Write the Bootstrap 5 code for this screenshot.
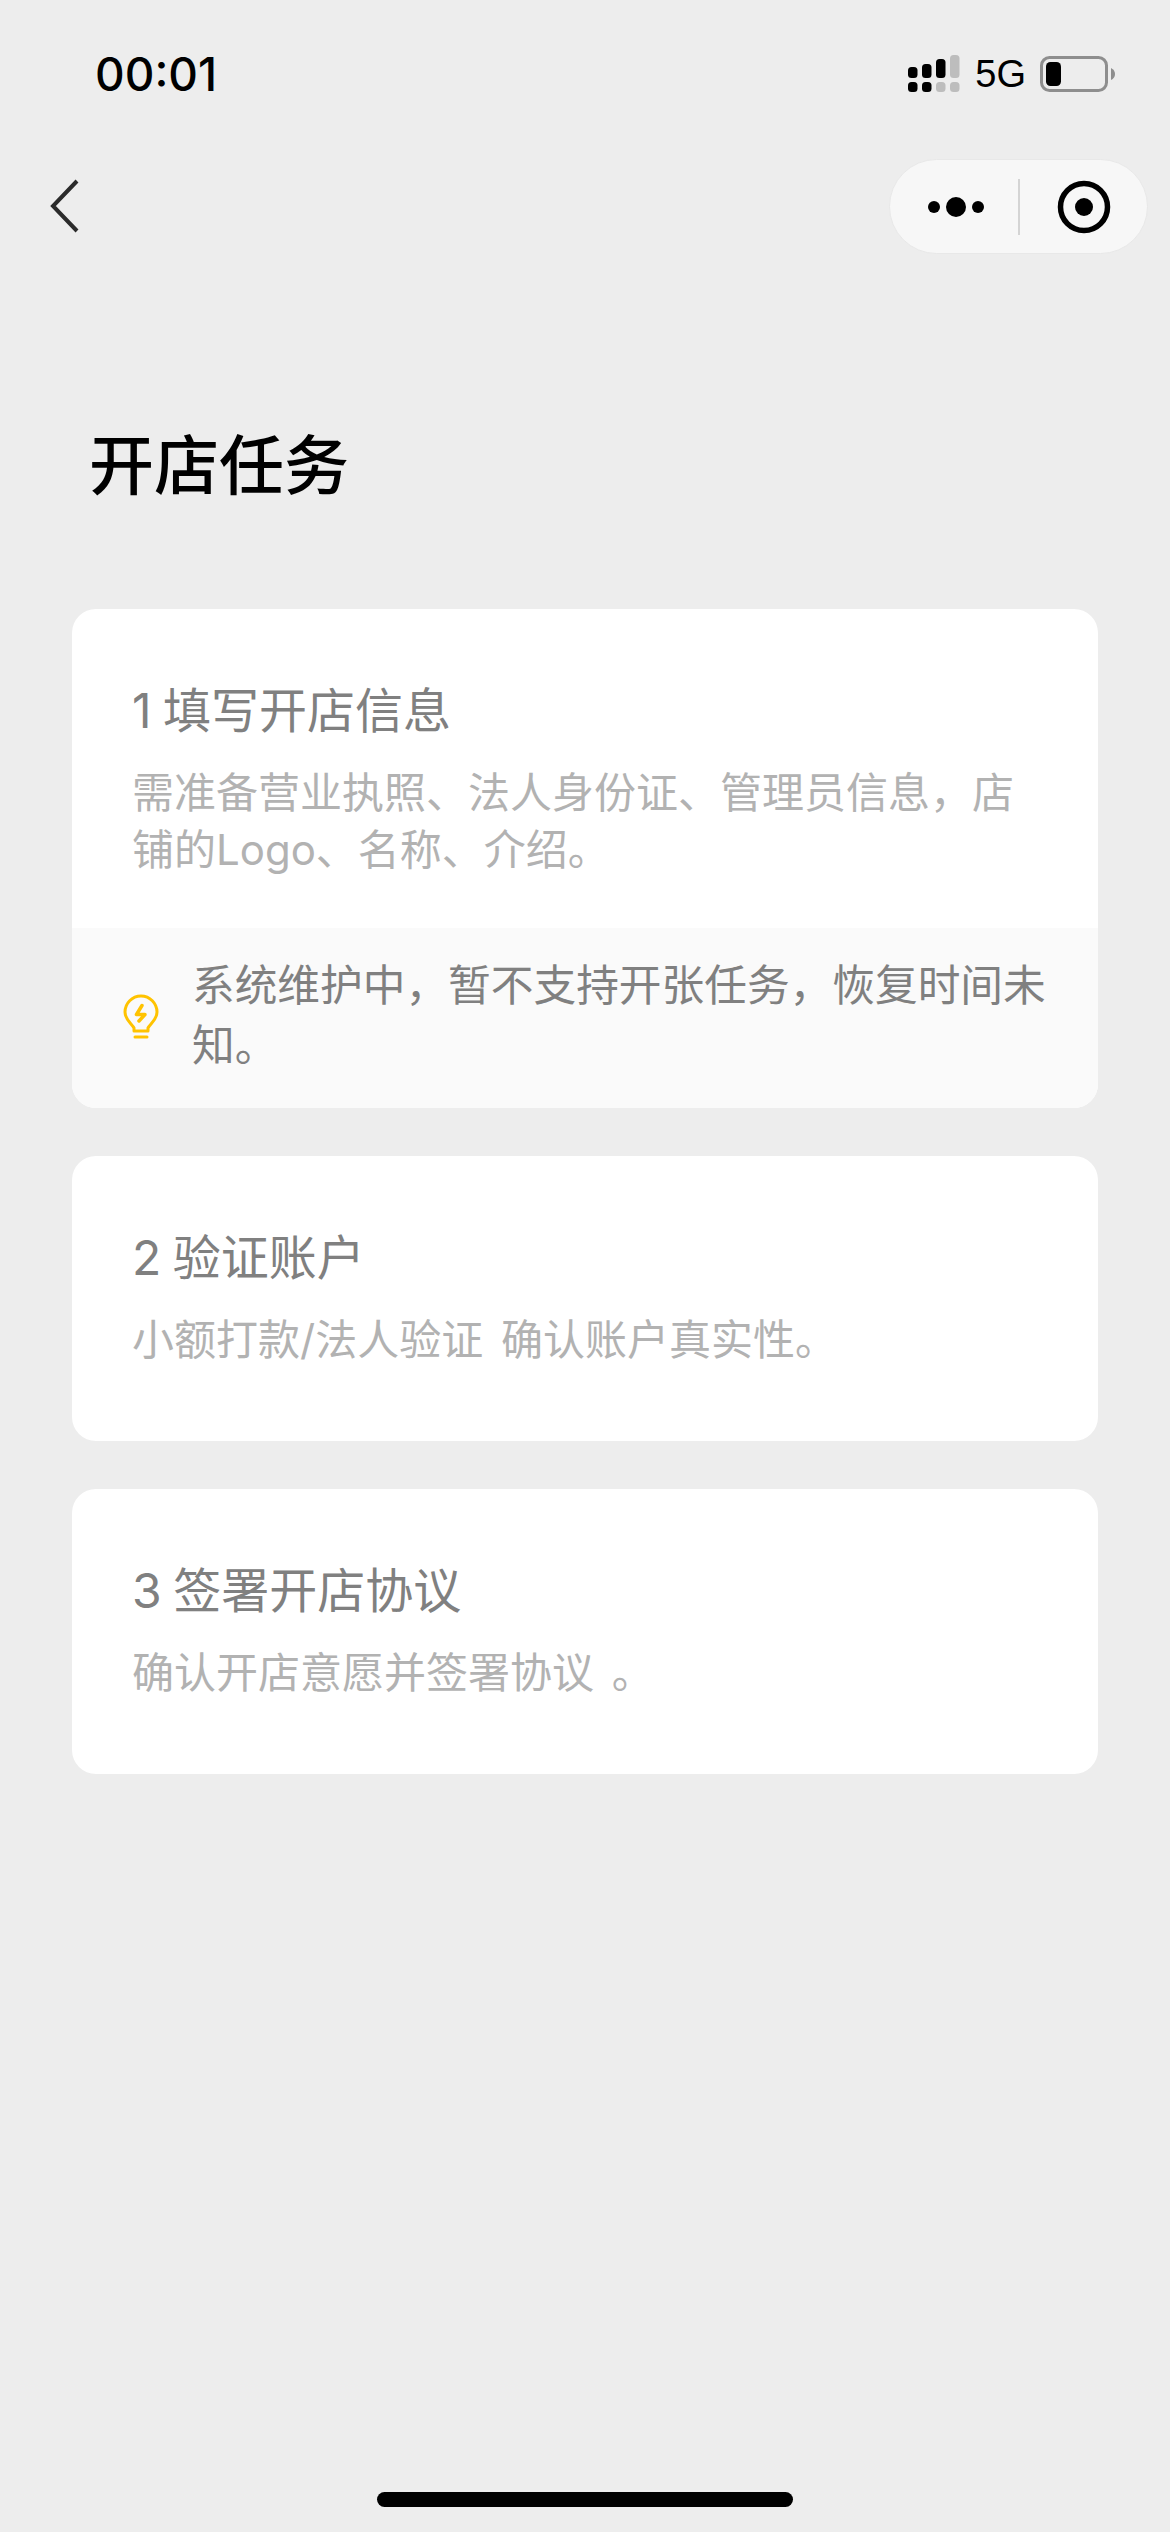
<!DOCTYPE html>
<html lang="zh-CN">
  <head>
    <meta charset="UTF-8">
    <meta name="viewport" content="width=device-width, initial-scale=1.0">
    <title>开店任务</title>
    <link href="https://cdn.jsdelivr.net/npm/bootstrap@5.3.0/dist/css/bootstrap.min.css" rel="stylesheet">
    <style>
      body {
        background: #ededed;
        font-family: Inter, "Noto Sans CJK SC", sans-serif;
        min-height: 2532px;
      }

      .status-bar {
        height: 132px;
        padding: 0 54px 0 95px;
      }

      .status-time {
        font-size: 46px;
        font-weight: 500;
        color: #000;
        line-height: 1;
        padding-top: 16px;
      }

      .status-net {
        font-family: "Liberation Sans", sans-serif;
        font-size: 38px;
        color: #000;
        line-height: 1;
        margin: 0 14px 0 15px;
      }

      .nav-row {
        height: 122px;
        padding: 27px 22px 0 50px;
      }

      .back-icon {
        margin-top: 20px;
      }

      .capsule {
        width: 259px;
        height: 95px;
        background: #f7f7f7;
        border: 1px solid #e8e8e8;
        border-radius: 48px;
      }

      .capsule-half {
        width: 129px;
      }

      .capsule-more {
        padding-left: 10px;
      }

      .capsule-scan {
        padding-left: 2px;
      }

      .capsule-line {
        width: 2px;
        height: 56px;
        background: #d4d4d4;
      }

      .page-title {
        font-size: 65px;
        font-weight: 500;
        color: #000;
        line-height: 92px;
        margin: 166px 0 97px 89px;
      }

      .task-list {
        padding: 0 72px;
      }

      .task-card {
        border: 0;
        border-radius: 24px;
        overflow: hidden;
        margin-bottom: 48px;
      }

      .task-body {
        padding: 72px 60px 73px;
      }

      .task-body-short {
        padding-bottom: 50px;
      }

      .task-name {
        font-size: 48px;
        font-weight: 400;
        color: #808080;
        line-height: 60px;
        word-spacing: -2px;
        margin-bottom: 23px;
      }

      .task-desc {
        font-size: 42px;
        color: #b2b2b2;
        line-height: 57px;
        word-spacing: 6px;
        margin: 0;
      }

      .task-notice {
        background: #fafafa;
        padding: 28px 32px 32px 51px;
        gap: 33px;
        font-size: 42.7px;
        line-height: 60px;
        color: #808080;
      }

      .home-bar {
        width: 416px;
        height: 15px;
        background: #000;
        border-radius: 8px;
        margin-bottom: 25px;
      }
    </style>
  </head>
  <body class="d-flex flex-column">
    <div class="status-bar d-flex justify-content-between align-items-center">
      <div class="status-time">00:01</div>
      <div class="d-flex align-items-center pt-3">
        <svg width="52" height="38" viewBox="0 0 52 38">
          <rect x="0" y="12" width="9.5" height="11" rx="3.5" fill="#000"/>
          <rect x="14" y="9" width="9.5" height="14" rx="3.5" fill="#000"/>
          <rect x="28" y="4" width="9.5" height="19" rx="3.5" fill="#000"/>
          <rect x="42" y="0" width="9.5" height="23" rx="3.5" fill="#bdbdbd"/>
          <rect x="0" y="27" width="9.5" height="10" rx="3.5" fill="#000"/>
          <rect x="14" y="27" width="9.5" height="10" rx="3.5" fill="#000"/>
          <rect x="28" y="27" width="9.5" height="10" rx="3.5" fill="#bdbdbd"/>
          <rect x="42" y="27" width="9.5" height="10" rx="3.5" fill="#bdbdbd"/>
        </svg>
        <span class="status-net">5G</span>
        <svg width="76" height="36" viewBox="0 0 76 36">
          <rect x="1.5" y="1.5" width="65" height="33" rx="8" fill="none" stroke="#8e8e8e" stroke-width="3"/>
          <rect x="6" y="6" width="15" height="24" rx="4.5" fill="#000"/>
          <path d="M71 12 Q75 14 75 18 Q75 22 71 24 Z" fill="#8e8e8e"/>
        </svg>
      </div>
    </div>

    <div class="nav-row d-flex justify-content-between align-items-start">
      <svg class="back-icon" width="30" height="54" viewBox="0 0 30 54">
        <path d="M27 2 L3 27 L27 52" fill="none" stroke="#2b2b2b" stroke-width="4"/>
      </svg>
      <div class="capsule d-flex align-items-center">
        <div class="capsule-half capsule-more d-flex justify-content-center">
          <svg width="62" height="22" viewBox="0 0 62 22">
            <circle cx="6" cy="11" r="6" fill="#000"/>
            <circle cx="28" cy="11" r="10" fill="#000"/>
            <circle cx="50" cy="11" r="6" fill="#000"/>
          </svg>
        </div>
        <div class="capsule-line"></div>
        <div class="capsule-half capsule-scan d-flex justify-content-center">
          <svg width="54" height="54" viewBox="0 0 54 54">
            <circle cx="27" cy="27" r="23.5" fill="none" stroke="#000" stroke-width="5.5"/>
            <circle cx="27" cy="27" r="9" fill="#000"/>
          </svg>
        </div>
      </div>
    </div>

    <h1 class="page-title">开店任务</h1>

    <div class="task-list">
      <div class="card task-card">
        <div class="task-body task-body-short">
          <h2 class="task-name">1 填写开店信息</h2>
          <p class="task-desc">需准备营业执照、法人身份证、管理员信息，店铺的Logo、名称、介绍。</p>
        </div>
        <div class="task-notice d-flex align-items-center">
          <svg class="flex-shrink-0" width="36" height="45" viewBox="0 0 36 45">
            <path d="M11 37 V34 C9 30 2 26 2 18 A16 16 0 0 1 34 18 C34 26 27 30 25 34 V37 Z" fill="none" stroke="#ffc300" stroke-width="3" stroke-linejoin="round"/>
            <path d="M12 43 H24" stroke="#ffc300" stroke-width="3" stroke-linecap="round"/>
            <path d="M19 11.5 L13.5 20.5 H22 L16 27" fill="none" stroke="#ffc300" stroke-width="3.5" stroke-linejoin="round" stroke-linecap="round"/>
          </svg>
          <div>系统维护中，暂不支持开张任务，恢复时间未知。</div>
        </div>
      </div>

      <div class="card task-card">
        <div class="task-body">
          <h2 class="task-name">2 验证账户</h2>
          <p class="task-desc">小额打款/法人验证 确认账户真实性。</p>
        </div>
      </div>

      <div class="card task-card">
        <div class="task-body">
          <h2 class="task-name">3 签署开店协议</h2>
          <p class="task-desc">确认开店意愿并签署协议 。</p>
        </div>
      </div>
    </div>

    <div class="home-bar mt-auto mx-auto"></div>

    <script src="https://cdn.jsdelivr.net/npm/bootstrap@5.3.0/dist/js/bootstrap.bundle.min.js"></script>
  </body>
</html>
